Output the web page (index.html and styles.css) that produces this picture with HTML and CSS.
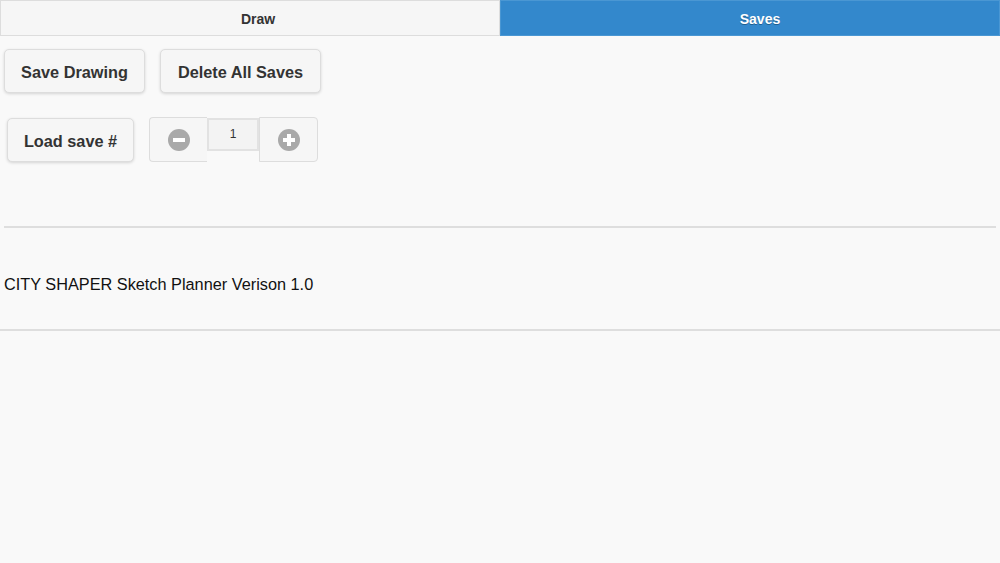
FILE: index.html
```html
<!DOCTYPE html>
<html>
<head>
<meta charset="utf-8">
<link rel="stylesheet" href="styles.css">
</head>
<body>
<nav class="tabs">
  <div class="tab">Draw</div>
  <div class="tab active">Saves</div>
</nav>
<div class="row row-one">
  <button class="btn btn-save">Save Drawing</button>
  <button class="btn btn-delete">Delete All Saves</button>
</div>
<div class="row row-two">
  <button class="btn btn-load">Load save #</button>
  <div class="stepper">
    <div class="step">
      <svg width="22" height="22" viewBox="0 0 22 22"><circle cx="11" cy="11" r="11" fill="#a9a9a9"/><rect x="5" y="9" width="12" height="4" fill="#fff"/></svg>
    </div>
    <div class="num">1</div>
    <div class="step">
      <svg width="22" height="22" viewBox="0 0 22 22"><circle cx="11" cy="11" r="11" fill="#a9a9a9"/><rect x="5" y="9" width="12" height="4" fill="#fff"/><rect x="9" y="5" width="4" height="12" fill="#fff"/></svg>
    </div>
  </div>
</div>
<hr class="rule rule-one">
<p class="version">CITY SHAPER Sketch Planner Verison 1.0</p>
<hr class="rule rule-two">
</body>
</html>
```

FILE: styles.css
```css
html, body {
  margin: 0;
  padding: 0;
  background: #f9f9f9;
  font-family: "Liberation Sans", Arial, sans-serif;
  color: #333;
}
.tabs {
  display: grid;
  grid-template-columns: 1fr 1fr;
  height: 36px;
}
.tab {
  display: flex;
  align-items: center;
  justify-content: center;
  padding-left: 16px;
  padding-top: 2px;
  font-size: 14px;
  font-weight: bold;
  background: #f6f6f6;
  border: 1px solid #dddddd;
  box-sizing: border-box;
  color: #333;
}
.tab.active {
  background: #3388cc;
  border-color: #4a97d3;
  color: #fff;
  text-shadow: 0 1px 0 #1f5f91;
  padding-left: 20px;
}
.row {
  display: flex;
  align-items: flex-start;
}
.row-one {
  margin-top: 13px;
  padding-left: 4px;
  gap: 15px;
}
.row-two {
  margin-top: 24px;
  padding-left: 7px;
  gap: 15px;
}
.btn {
  height: 44px;
  box-sizing: border-box;
  font-family: "Liberation Sans", Arial, sans-serif;
  font-size: 16.3px;
  font-weight: bold;
  color: #333;
  background: #f6f6f6;
  border: 1px solid #dddddd;
  border-radius: 5px;
  box-shadow: 0 1px 3px rgba(0,0,0,0.15);
  padding: 2px 0 0 0;
  margin: 0;
  white-space: nowrap;
  text-align: center;
}
.btn-save { width: 141px; }
.btn-delete { width: 161px; }
.btn-load { width: 127px; margin-top: 1px; }
.stepper {
  display: flex;
  height: 45px;
  width: 169px;
  box-sizing: border-box;
}
.step {
  width: 58px;
  height: 45px;
  box-sizing: border-box;
  border: 1px solid #dddddd;
  background: #f6f6f6;
  display: flex;
  align-items: center;
  justify-content: center;
}
.step:first-child {
  border-radius: 4px 0 0 4px;
  border-right: none;
}
.step:last-child {
  border-radius: 0 4px 4px 0;
  border-left: 1px solid #dddddd;
  width: 59px;
}
.num {
  width: 52px;
  height: 33px;
  margin-top: 1px;
  box-sizing: border-box;
  border: 2px solid #e2e2e2;
  background: #f3f3f3;
  font-size: 12px;
  text-align: center;
  padding-top: 7px;
  color: #333;
}
.rule {
  border: none;
  height: 2px;
  background: #dedede;
  margin: 0;
}
.rule-one {
  margin: 64px 4px 0 4px;
}
.version {
  margin: 0;
  padding-left: 4px;
  height: 101px;
  line-height: 112px;
  font-size: 16.3px;
  color: #111;
}
.rule-two {
  margin: 0;
}
```
